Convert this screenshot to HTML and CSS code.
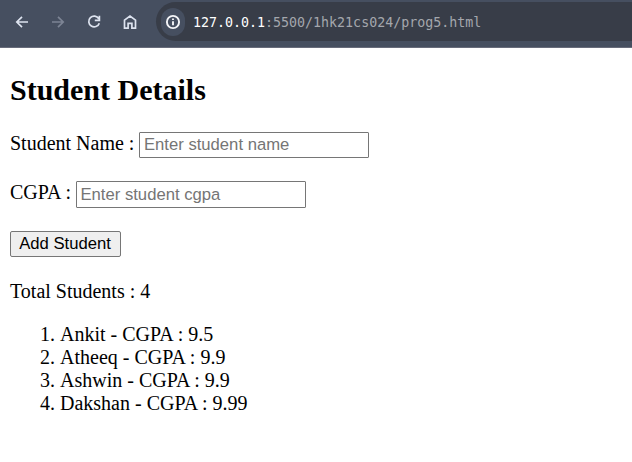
FILE: index.html
```html
<!DOCTYPE html>
<html lang="en">
<head>
<meta charset="utf-8">
<title>Student Details</title>
<link rel="stylesheet" href="styles.css">
</head>
<body>
<header class="toolbar">
  <nav class="nav">
    <svg class="icon" viewBox="0 0 16 16"><path d="M14 8H3M8 2.8L2.8 8L8 13.2"/></svg>
    <svg class="icon disabled" viewBox="0 0 16 16"><path d="M2 8h11M8 2.8L13.2 8L8 13.2"/></svg>
    <svg class="icon" viewBox="0 0 16 16"><path d="M12.8 4.7A5.4 5.4 0 1 0 13.3 9.2M13.4 1.8v4.6H8.8"/></svg>
    <svg class="icon" viewBox="0 0 16 16"><path d="M2.5 6.1L8 2l5.5 4.1v8H9.9V9.4H6.1v4.7H2.5z"/></svg>
  </nav>
  <div class="address">
    <span class="info"><svg class="icon" viewBox="0 0 16 16"><circle cx="8" cy="8" r="6.1"/><path d="M8 7.2v4M8 4.5v1.6"/></svg></span>
    <span class="url"><span class="host">127.0.0.1</span>:5500/1hk21cs024/prog5.html</span>
  </div>
</header>
<main class="page">
  <h2 class="title">Student Details</h2>
  <div class="field"><label for="name">Student Name :</label><input id="name" class="input" type="text" placeholder="Enter student name"></div>
  <div class="field field-cgpa"><label for="cgpa">CGPA :</label><input id="cgpa" class="input" type="text" placeholder="Enter student cgpa"></div>
  <button class="add" type="button">Add Student</button>
  <p class="total">Total Students : 4</p>
  <ol class="students">
    <li>Ankit - CGPA : 9.5</li>
    <li>Atheeq - CGPA : 9.9</li>
    <li>Ashwin - CGPA : 9.9</li>
    <li>Dakshan - CGPA : 9.99</li>
  </ol>
</main>
</body>
</html>
```
FILE: styles.css
```css
* { box-sizing: border-box; }
body {
  margin: 0;
  background: #fff;
  color: #000;
  font: 20px/23px "Liberation Serif", serif;
  overflow: hidden;
}
.toolbar {
  display: flex;
  height: 48px;
  padding: 2px 0 5px 14px;
  background: #464f60;
  border-bottom: 1px solid #686c7b;
}
.nav {
  display: flex;
  align-items: center;
  gap: 20px;
  margin-right: 18px;
}
.icon {
  display: block;
  width: 16px;
  height: 16px;
  fill: none;
  stroke: #dde3ef;
  stroke-width: 1.7;
}
.disabled { stroke: #7c8494; }
.address {
  display: flex;
  flex: 1;
  align-items: center;
  height: 39px;
  padding-left: 5px;
  background: #383d48;
  border-radius: 20px 0 0 20px;
}
.info {
  display: flex;
  align-items: center;
  justify-content: center;
  width: 24px;
  height: 28px;
  margin-right: 8px;
  background: #464f60;
  border-radius: 12px;
}
.info .icon { stroke: #f4f5f8; stroke-width: 1.9; }
.url {
  padding-top: 2px;
  color: #a4a7ad;
  font: 13.3px/18px "DejaVu Sans Mono", monospace;
  white-space: pre;
}
.host { color: #fff; }
.page { padding: 25px 10px 0; }
.title {
  margin: 0 0 25px;
  font-size: 30px;
  line-height: 34px;
}
.field {
  display: flex;
  gap: 5px;
  height: 26px;
}
.input {
  width: 230px;
  height: 26px;
  padding: 1px 3.5px;
  border: 1px solid #767676;
  border-radius: 1px;
  font: 16.667px "Liberation Sans", sans-serif;
}
.input::placeholder { color: #757575; }
.field-cgpa { height: 27px; margin-top: 23px; }
.field-cgpa .input { height: 27px; }
.add {
  display: block;
  width: 111px;
  height: 26px;
  margin: 23px 0;
  padding: 0 1px 0 0;
  background: #efefef;
  border: 1px solid #767676;
  border-radius: 2px;
  color: #000;
  font: 16.667px "Liberation Sans", sans-serif;
}
.total { margin: 0 0 20px; }
.students { margin: 0; padding-left: 50px; }
```
